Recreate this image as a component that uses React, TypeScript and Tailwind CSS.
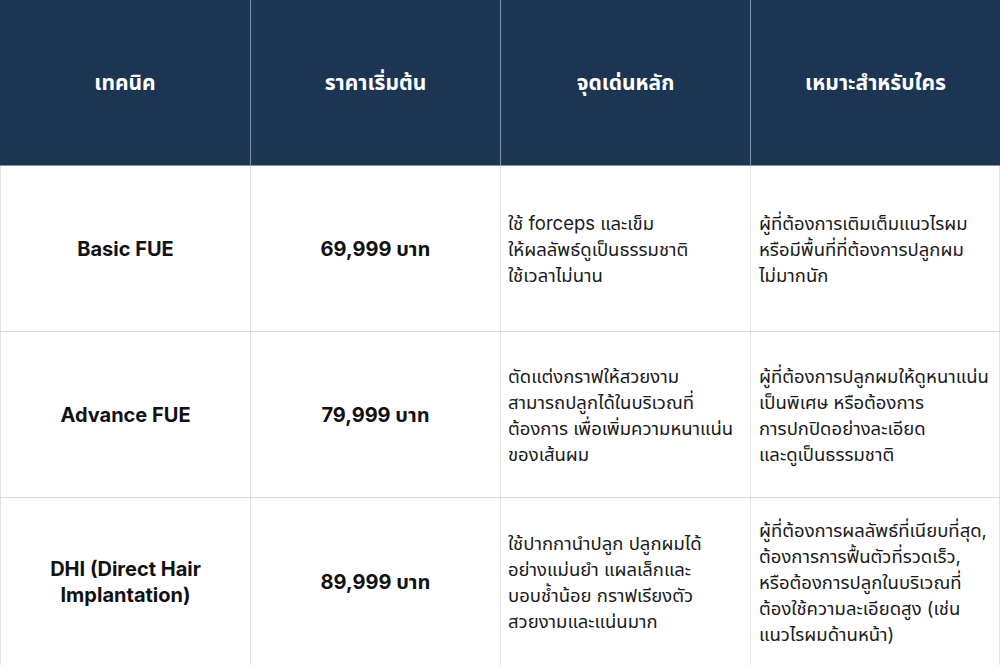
import React from "react";

const rows = [
  {
    name: ["Basic FUE"],
    price: "69,999 บาท",
    highlight: ["ใช้ forceps และเข็ม", "ให้ผลลัพธ์ดูเป็นธรรมชาติ", "ใช้เวลาไม่นาน"],
    suit: ["ผู้ที่ต้องการเติมเต็มแนวไรผม", "หรือมีพื้นที่ที่ต้องการปลูกผม", "ไม่มากนัก"],
  },
  {
    name: ["Advance FUE"],
    price: "79,999 บาท",
    highlight: ["ตัดแต่งกราฟให้สวยงาม", "สามารถปลูกได้ในบริเวณที่", "ต้องการ เพื่อเพิ่มความหนาแน่น", "ของเส้นผม"],
    suit: ["ผู้ที่ต้องการปลูกผมให้ดูหนาแน่น", "เป็นพิเศษ หรือต้องการ", "การปกปิดอย่างละเอียด", "และดูเป็นธรรมชาติ"],
  },
  {
    name: ["DHI (Direct Hair", "Implantation)"],
    price: "89,999 บาท",
    highlight: ["ใช้ปากกานำปลูก ปลูกผมได้", "อย่างแม่นยำ แผลเล็กและ", "บอบช้ำน้อย กราฟเรียงตัว", "สวยงามและแน่นมาก"],
    suit: [
      "ผู้ที่ต้องการผลลัพธ์ที่เนียบที่สุด,",
      "ต้องการการฟื้นตัวที่รวดเร็ว,",
      "หรือต้องการปลูกในบริเวณที่",
      "ต้องใช้ความละเอียดสูง (เช่น",
      "แนวไรผมด้านหน้า)",
    ],
  },
];

const headers = ["เทคนิค", "ราคาเริ่มต้น", "จุดเด่นหลัก", "เหมาะสำหรับใคร"];

function Lines({ lines }: { lines: string[] }) {
  return (
    <>
      {lines.map((l, i) => (
        <span key={i} className="block whitespace-nowrap">
          {l}
        </span>
      ))}
    </>
  );
}

export default function App() {
  return (
    <div
      className="w-[1000px] h-[665px] bg-white text-[#111] overflow-hidden"
      style={{ fontFamily: 'Inter, "Noto Sans Thai", "Noto Sans", sans-serif' }}
    >
      {/* header */}
      <div className="grid grid-cols-4 h-[166px] bg-[#1b3553] border-b border-[#7f93ad]">
        {headers.map((h, i) => (
          <div
            key={h}
            className={`flex items-center justify-center text-white text-[21px] font-bold ${
              i > 0 ? "border-l border-[#7f93ad]" : ""
            }`}
          >
            {h}
          </div>
        ))}
      </div>

      {rows.map((r, ri) => (
        <div
          key={ri}
          className={`grid grid-cols-4 ${ri < 2 ? "h-[166px] border-b border-[#d6d6d6]" : "h-[167px]"}`}
        >
          <div className="flex items-center justify-center text-center text-[20px] font-bold leading-[26px] border-l border-[#e2e2e2]">
            <div>
              <Lines lines={r.name} />
            </div>
          </div>
          <div className="flex items-center justify-center text-[20px] font-bold border-l border-[#e2e2e2]">
            {r.price}
          </div>
          <div className="flex items-center pl-[7px] text-[18.5px] leading-[26px] text-[#1a1a1a] border-l border-[#e2e2e2]">
            <div>
              <Lines lines={r.highlight} />
            </div>
          </div>
          <div className="flex items-center pl-[8px] text-[18.5px] leading-[26px] text-[#1a1a1a] border-l border-[#e2e2e2] border-r">
            <div>
              <Lines lines={r.suit} />
            </div>
          </div>
        </div>
      ))}
    </div>
  );
}
